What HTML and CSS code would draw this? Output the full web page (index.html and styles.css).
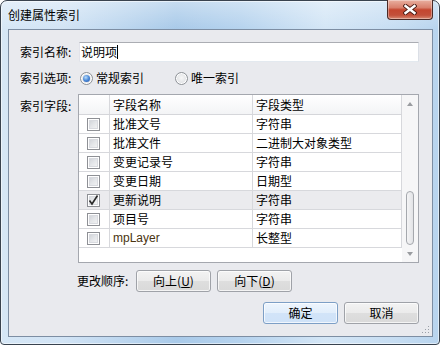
FILE: index.html
```html
<!DOCTYPE html>
<html lang="zh-CN">
<head>
<meta charset="utf-8">
<title>创建属性索引</title>
<link rel="stylesheet" href="styles.css">
</head>
<body>
<div class="window">
  <div class="titlebar">
    <span class="title">创建属性索引</span>
    <div class="close">
      <svg width="14" height="11" viewBox="0 0 14 11">
        <path d="M2.5 2 L11.5 9 M11.5 2 L2.5 9" stroke="#4a1a12" stroke-width="4.2" stroke-linecap="square" fill="none"/>
        <path d="M2.5 2 L11.5 9 M11.5 2 L2.5 9" stroke="#ffffff" stroke-width="2.4" stroke-linecap="square" fill="none"/>
      </svg>
    </div>
  </div>
  <div class="client">
    <div class="row row-name">
      <span class="lbl">索引名称:</span>
      <div class="textbox">说明项<span class="caret"></span></div>
    </div>
    <div class="row row-opt">
      <span class="lbl">索引选项:</span>
      <span class="radio checked"><span class="dot"></span></span><span class="rtext">常规索引</span>
      <span class="radio second"></span><span class="rtext">唯一索引</span>
    </div>
    <div class="row row-fields">
      <span class="lbl">索引字段:</span>
      <div class="grid">
        <div class="grid-main">
          <div class="gr head"><div class="c c1"></div><div class="c c2">字段名称</div><div class="c c3">字段类型</div></div>
          <div class="gr"><div class="c c1"><span class="cb"></span></div><div class="c c2">批准文号</div><div class="c c3">字符串</div></div>
          <div class="gr"><div class="c c1"><span class="cb"></span></div><div class="c c2">批准文件</div><div class="c c3">二进制大对象类型</div></div>
          <div class="gr"><div class="c c1"><span class="cb"></span></div><div class="c c2">变更记录号</div><div class="c c3">字符串</div></div>
          <div class="gr"><div class="c c1"><span class="cb"></span></div><div class="c c2">变更日期</div><div class="c c3">日期型</div></div>
          <div class="gr sel"><div class="c c1"><span class="cb checked"><svg width="11" height="11" viewBox="0 0 11 11"><path d="M1.5 5.5 L4 9 L9.5 0.5" stroke="#2a2a2a" stroke-width="1.6" fill="none"/></svg></span></div><div class="c c2">更新说明</div><div class="c c3">字符串</div></div>
          <div class="gr"><div class="c c1"><span class="cb"></span></div><div class="c c2">项目号</div><div class="c c3">字符串</div></div>
          <div class="gr"><div class="c c1"><span class="cb"></span></div><div class="c c2 latin">mpLayer</div><div class="c c3">长整型</div></div>
          <div class="filler"></div>
        </div>
        <div class="vscroll">
          <div class="sb-btn"><span class="arr up"></span></div>
          <div class="track"></div>
          <div class="thumb"></div>
          <div class="sb-btn"><span class="arr down"></span></div>
        </div>
      </div>
    </div>
    <div class="row row-order">
      <span class="lbl">更改顺序:</span>
      <div class="btn">向上(<u>U</u>)</div>
      <div class="btn">向下(<u>D</u>)</div>
    </div>
    <div class="row row-ok">
      <div class="btn default">确定</div>
      <div class="btn">取消</div>
    </div>
    <svg class="grip" width="8" height="8" viewBox="0 0 8 8">
      <rect x="6" y="0" width="1" height="1" fill="#9aa0a8"/>
      <rect x="3" y="3" width="1" height="1" fill="#9aa0a8"/>
      <rect x="6" y="3" width="1" height="1" fill="#9aa0a8"/>
      <rect x="0" y="6" width="1" height="1" fill="#9aa0a8"/>
      <rect x="3" y="6" width="1" height="1" fill="#9aa0a8"/>
      <rect x="6" y="6" width="1" height="1" fill="#9aa0a8"/>
    </svg>
  </div>
</div>
</body>
</html>
```

FILE: styles.css
```css
* { box-sizing: border-box; margin: 0; padding: 0; }
html, body { width: 440px; height: 345px; overflow: hidden; background: #ffffff; }
body {
  font-family: "Noto Sans CJK SC", "Microsoft YaHei", sans-serif;
  font-size: 12px;
  color: #000;
}
.window {
  width: 440px;
  height: 345px;
  border: 1px solid #39434f;
  border-radius: 7px 7px 4px 4px;
  background:
    linear-gradient(to bottom, rgba(255,255,255,0.35), rgba(255,255,255,0) 28px),
    linear-gradient(to right, #d6e7f6 0%, #d2e4f5 14%, #a9cae9 40%, #b6d3ee 55%, #d4e6f6 74%, #c6ddf2 90%, #b8d4ee 100%);
  box-shadow: inset 0 0 0 1px rgba(255,255,255,0.55);
  display: flex;
  flex-direction: column;
}
.titlebar {
  height: 28px;
  display: flex;
  justify-content: space-between;
  align-items: flex-start;
}
.title {
  padding-left: 7px;
  line-height: 28px;
  color: #000;
}
.close {
  width: 46px;
  height: 20px;
  margin-top: -1px;
  margin-right: 6px;
  border: 1px solid #4a2a26;
  border-top: none;
  border-radius: 0 0 4px 4px;
  background: linear-gradient(to bottom, #e9b0a0 0%, #d9806c 40%, #c4462f 52%, #c2503a 80%, #d88a72 100%);
  box-shadow: inset 0 0 0 1px rgba(255,255,255,0.35);
  display: flex;
  align-items: center;
  justify-content: center;
}
.client {
  position: relative;
  margin: 0 6px 0 7px;
  height: 308px;
  border: 1px solid #7d8ea3;
  background: #e9eaee;
  padding: 12px 13px 0 11px;
}
.row { display: flex; align-items: center; }
.lbl { flex: none; line-height: 16px; color: #000; }
.row-name { height: 20px; }
.row-name .lbl { width: 59px; }
.textbox {
  flex: 1;
  height: 20px;
  border: 1px solid;
  border-color: #abadb3 #dbdfe6 #e3e9ef #e2e3ea;
  background: #fff;
  padding-left: 1px;
  display: flex;
  align-items: center;
  line-height: 16px;
}
.caret { width: 1px; height: 14px; background: #000; }
.row-opt { margin-top: 6px; height: 20px; }
.row-opt .lbl { width: 60px; }
.radio {
  width: 13px;
  height: 13px;
  border-radius: 50%;
  border: 1px solid #8e9297;
  background: radial-gradient(circle at 50% 45%, #f7f7f7 0%, #dfe1e4 70%, #cdd0d4 100%);
  box-shadow: inset 0 0 0 1px #fff;
  display: flex;
  align-items: center;
  justify-content: center;
}
.radio .dot {
  width: 7px;
  height: 7px;
  border-radius: 50%;
  background: radial-gradient(circle at 40% 35%, #b9dcfb 0%, #4c8ad8 50%, #1f4fa4 100%);
}
.radio.second { margin-left: 31px; }
.rtext { margin-left: 3px; line-height: 16px; }
.row-fields { margin-top: 6px; align-items: flex-start; }
.row-fields .lbl { width: 58px; padding-top: 4px; }
.grid {
  width: 341px;
  height: 169px;
  border: 1px solid #a4a7ae;
  background: #fff;
  display: flex;
}
.grid-main { width: 323px; display: flex; flex-direction: column; }
.gr {
  display: flex;
  height: 19px;
  flex: none;
  border-bottom: 1px solid #d7d8dc;
}
.gr.head {
  height: 20px;
  background: linear-gradient(to bottom, #ffffff, #f3f4f6);
  border-bottom-color: #d5d6da;
}
.gr.sel { background: #ebebee; }
.c {
  border-right: 1px solid #d7d8dc;
  line-height: 18px;
  padding-left: 3px;
  white-space: nowrap;
  overflow: hidden;
}
.head .c { line-height: 19px; }
.c1 { width: 31px; padding-left: 8px; display: flex; align-items: center; }
.c2 { width: 143px; }
.c3 { width: 149px; }
.latin { color: #4a3410; font-family: "Liberation Sans", "Noto Sans", sans-serif; }
.filler { flex: 1; }
.cb {
  width: 13px;
  height: 13px;
  border: 1px solid #8e9095;
  background: linear-gradient(135deg, #c9ccd2 0%, #e4e6e9 50%, #f7f7f7 100%);
  box-shadow: inset 0 0 0 1px #fff, inset 0 0 0 2px #d8dadf;
  display: flex;
  align-items: center;
  justify-content: center;
}
.cb.checked { background: linear-gradient(135deg, #d4d6da 0%, #eceef0 60%, #f9f9f9 100%); }
.vscroll {
  width: 16px;
  background: #f6f6f7;
  display: flex;
  flex-direction: column;
  align-items: center;
}
.sb-btn {
  width: 16px;
  height: 17px;
  flex: none;
  display: flex;
  align-items: center;
  justify-content: center;
}
.arr { width: 0; height: 0; border-left: 3.5px solid transparent; border-right: 3.5px solid transparent; }
.arr.up { border-bottom: 4px solid #9a9ca0; }
.arr.down { border-top: 4px solid #9a9ca0; }
.track { flex: 1; }
.thumb {
  width: 8px;
  height: 54px;
  flex: none;
  border: 1px solid #a5a8ad;
  border-radius: 4px;
  background: linear-gradient(to right, #f4f4f5, #e2e3e6);
}
.row-order { margin-top: 7px; height: 22px; }
.row-order .lbl { margin-left: 57px; width: 59px; }
.row-order .btn + .btn { margin-left: 6px; }
.row-ok { margin-top: 10px; height: 22px; justify-content: flex-end; gap: 6px; }
.btn {
  width: 75px;
  height: 22px;
  border: 1px solid #9fa2a8;
  border-radius: 3px;
  background: linear-gradient(to bottom, #f3f3f3 0%, #ebebeb 48%, #dedede 52%, #d9d9d9 100%);
  box-shadow: inset 0 0 0 1px rgba(255,255,255,0.7);
  text-align: center;
  line-height: 20px;
  color: #000;
}
.btn u { text-decoration: underline; text-underline-offset: 1px; }
.btn.default {
  border-color: #7d9fc6;
  background: linear-gradient(to bottom, #eef5fd 0%, #e2eefb 48%, #d2e4f8 52%, #cfe2f8 100%);
}
.grip { position: absolute; right: 2px; bottom: 2px; }
```
